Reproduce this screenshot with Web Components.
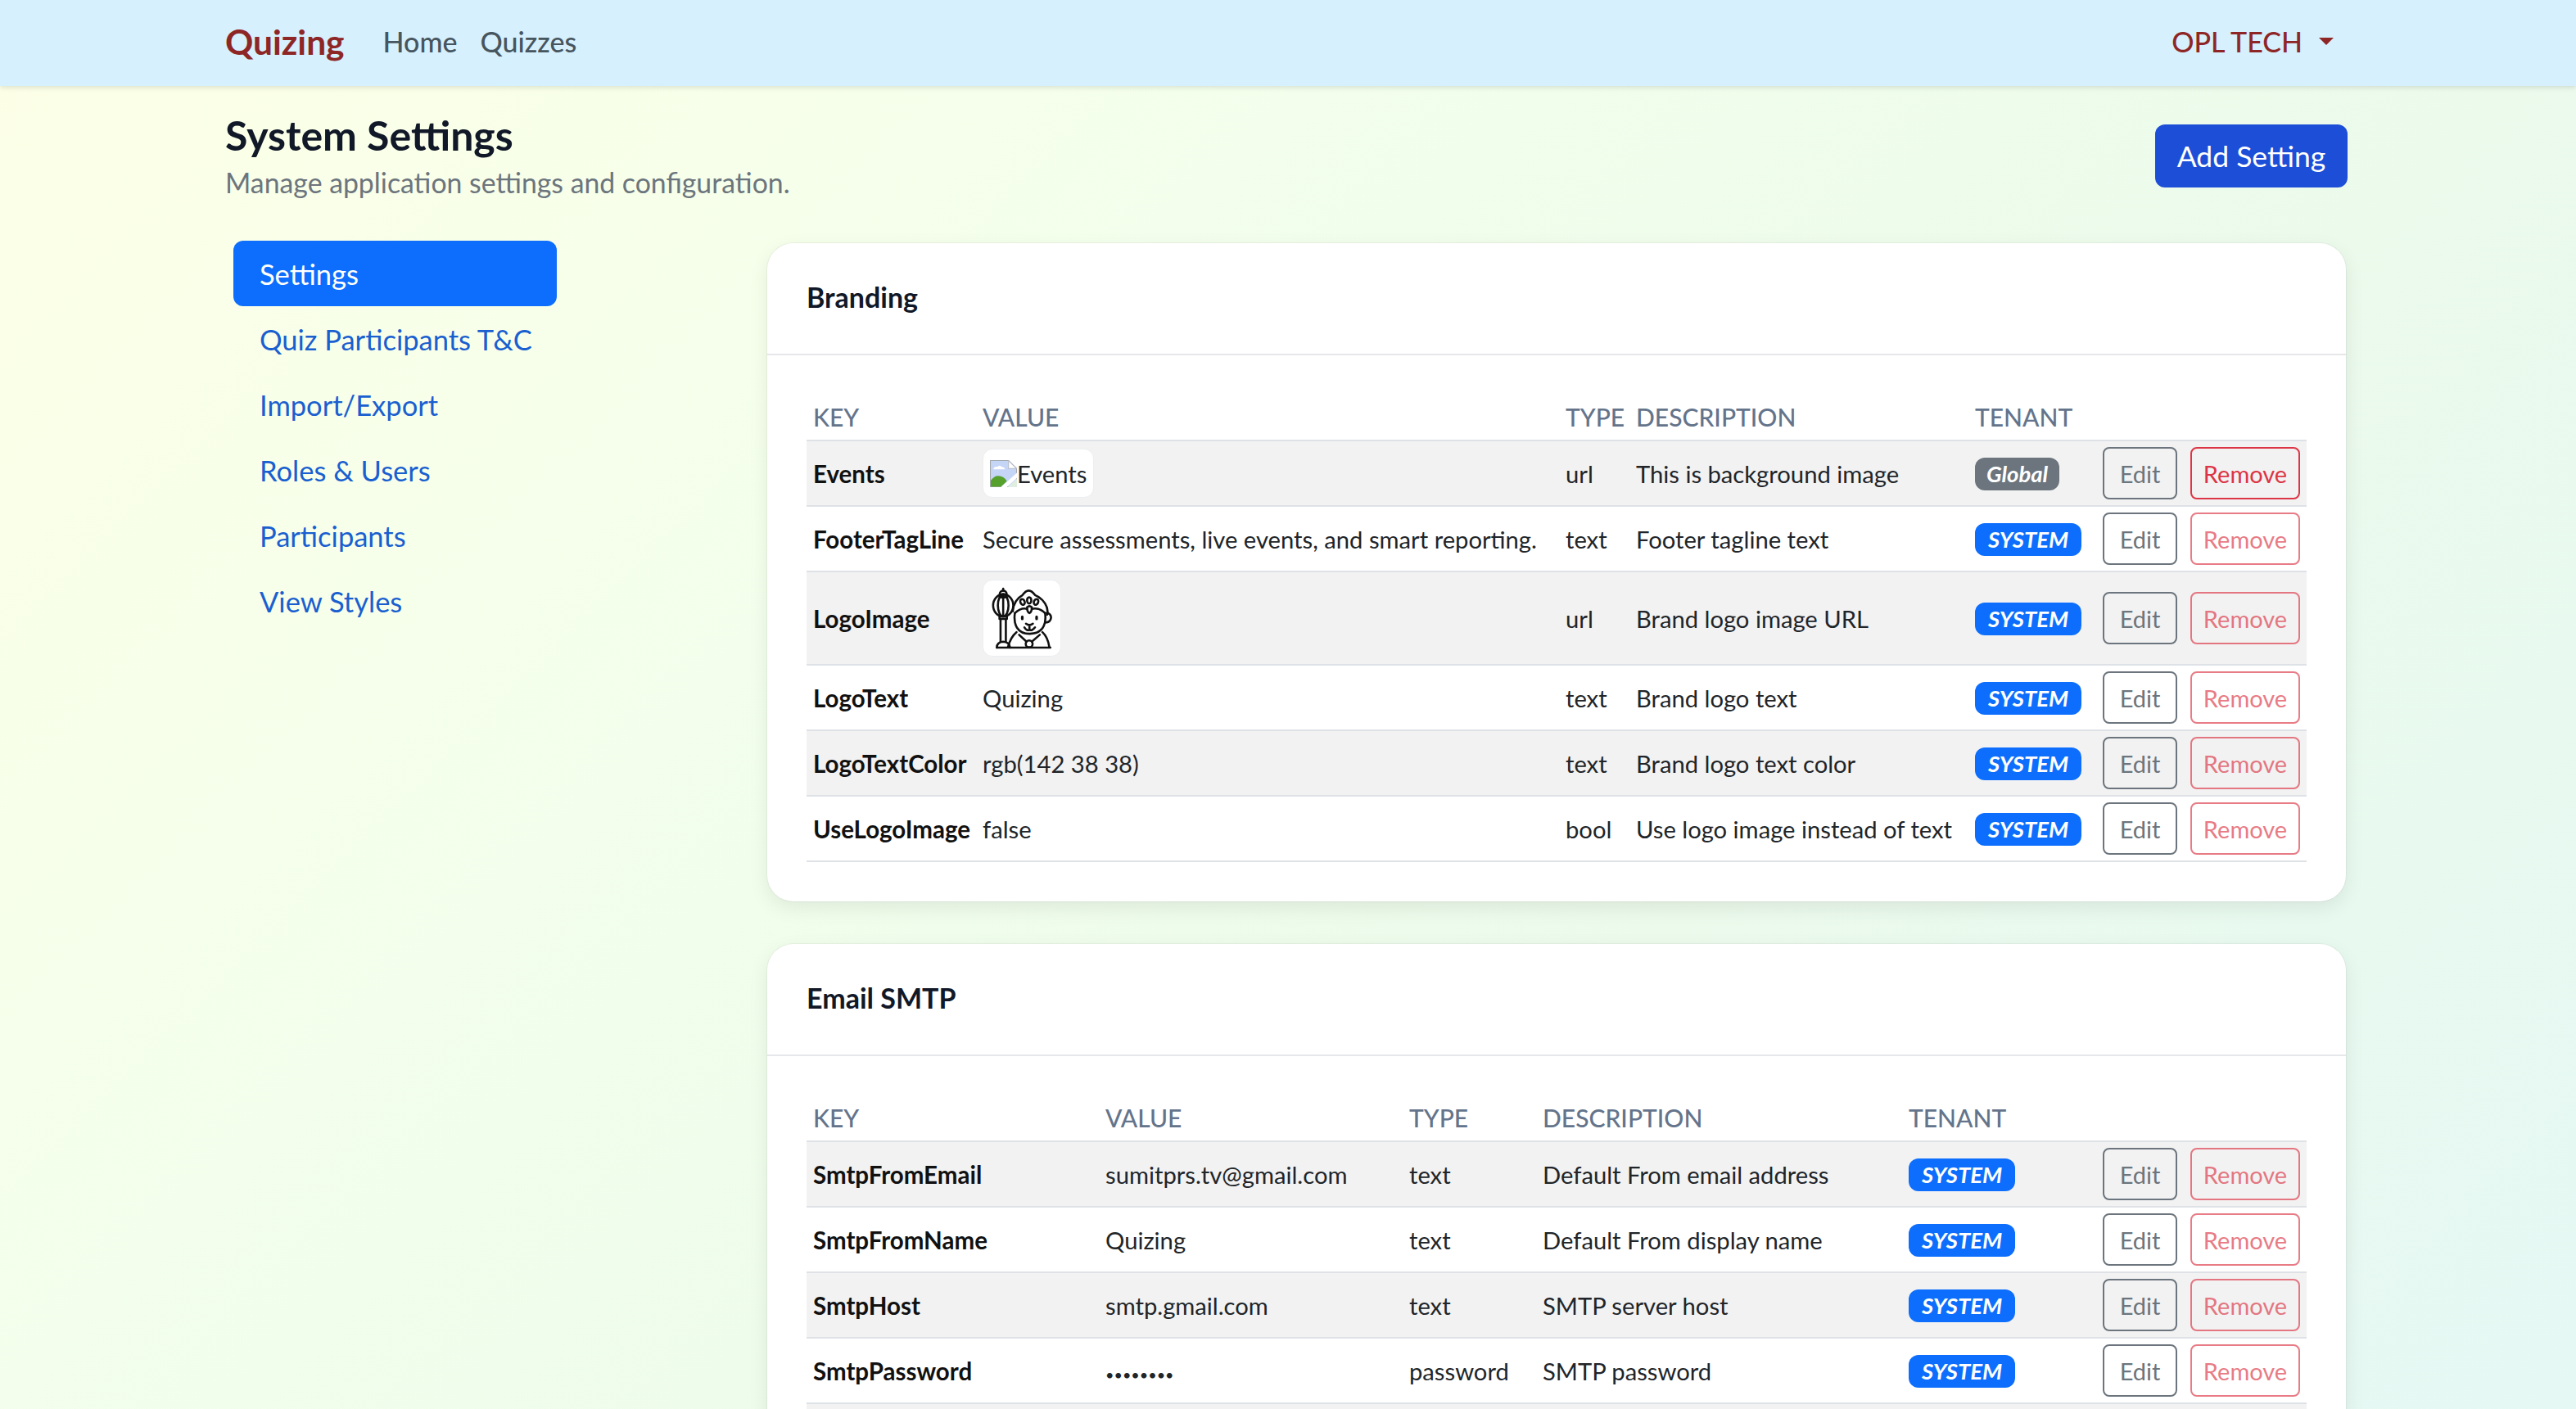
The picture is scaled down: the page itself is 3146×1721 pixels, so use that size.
<!DOCTYPE html>
<html lang="en">
<head>
<meta charset="utf-8">
<title>System Settings</title>
<style>
  html, body { margin: 0; height: 100%; overflow: hidden; }
  body {
    font-family: "Lato", "Noto Sans", sans-serif;
    font-size: 32px;
    color: #212529;
    background: linear-gradient(135deg, #fdffe6 0%, #f3ffec 35%, #ebfaeb 65%, #e5f8f4 100%);
  }
</style>
</head>
<body>
<app-navbar brand="Quizing" account="OPL TECH">
  <nav-link>Home</nav-link>
  <nav-link>Quizzes</nav-link>
</app-navbar>

<settings-page heading="System Settings" subtitle="Manage application settings and configuration." action="Add Setting">
  <side-pill slot="side" active>Settings</side-pill>
  <side-pill slot="side">Quiz Participants T&amp;C</side-pill>
  <side-pill slot="side">Import/Export</side-pill>
  <side-pill slot="side">Roles &amp; Users</side-pill>
  <side-pill slot="side">Participants</side-pill>
  <side-pill slot="side">View Styles</side-pill>

  <settings-card heading="Branding" cols="207px 712px 86px 414px 156px 257px">
    <setting-row key="Events" type="url" description="This is background image" tenant="Global">
      <image-chip slot="value" broken>Events</image-chip>
    </setting-row>
    <setting-row key="FooterTagLine" value="Secure assessments, live events, and smart reporting." type="text" description="Footer tagline text" tenant="SYSTEM"></setting-row>
    <setting-row key="LogoImage" type="url" description="Brand logo image URL" tenant="SYSTEM">
      <image-chip slot="value" logo></image-chip>
    </setting-row>
    <setting-row key="LogoText" value="Quizing" type="text" description="Brand logo text" tenant="SYSTEM"></setting-row>
    <setting-row key="LogoTextColor" value="rgb(142 38 38)" type="text" description="Brand logo text color" tenant="SYSTEM"></setting-row>
    <setting-row key="UseLogoImage" value="false" type="bool" description="Use logo image instead of text" tenant="SYSTEM"></setting-row>
  </settings-card>

  <settings-card heading="Email SMTP" cols="357px 371px 163px 447px 237px 257px">
    <setting-row key="SmtpFromEmail" value="sumitprs.tv@gmail.com" type="text" description="Default From email address" tenant="SYSTEM"></setting-row>
    <setting-row key="SmtpFromName" value="Quizing" type="text" description="Default From display name" tenant="SYSTEM"></setting-row>
    <setting-row key="SmtpHost" value="smtp.gmail.com" type="text" description="SMTP server host" tenant="SYSTEM"></setting-row>
    <setting-row key="SmtpPassword" type="password" description="SMTP password" tenant="SYSTEM">
      <span slot="value" style="font-size:18px">••••••••</span>
    </setting-row>
    <setting-row blank></setting-row>
  </settings-card>
</settings-page>

<script>
// Top navigation bar
class AppNavbar extends HTMLElement {
  connectedCallback() {
    this.attachShadow({ mode: 'open' });
    this.shadowRoot.innerHTML = `
      <style>
        :host {
          display: flex;
          align-items: center;
          height: 105px;
          padding: 0 296px 5px 275px;
          box-sizing: border-box;
          background: #d6f0fd;
          box-shadow: 0 2px 6px rgba(0,0,0,.12);
          position: relative;
        }
        .brand { font-size: 42.5px; font-weight: 700; color: rgb(142,38,38); margin-right: 47px; }
        .links { display: flex; gap: 28px; flex: 1; }
        .account { display: flex; align-items: center; gap: 20px; font-size: 34px; font-weight: 500; color: rgb(142,38,38); }
        .caret { width: 0; height: 0; border: 9px solid transparent; border-top-color: rgb(142,38,38); border-bottom: 0; }
      </style>
      <span class="brand">${this.getAttribute('brand')}</span>
      <div class="links"><slot></slot></div>
      <div class="account">${this.getAttribute('account')}<span class="caret"></span></div>
    `;
  }
}

class NavLink extends HTMLElement {
  connectedCallback() {
    this.attachShadow({ mode: 'open' });
    this.shadowRoot.innerHTML = `
      <style>:host { display: block; font-size: 34px; font-weight: 500; color: #47555e; }</style>
      <slot></slot>
    `;
  }
}

// Page head plus sidebar / content columns
class SettingsPage extends HTMLElement {
  connectedCallback() {
    this.attachShadow({ mode: 'open' });
    this.shadowRoot.innerHTML = `
      <style>
        :host { display: block; padding: 0 281px 0 275px; }
        .head { display: flex; justify-content: space-between; height: 192px; }
        h1 { margin: 32px 0 0; font-size: 50px; line-height: 56px; font-weight: 700; color: #111827; }
        p { margin: 6px 0 0; font-size: 33.8px; line-height: 48px; color: #6c757d; }
        .add {
          align-self: flex-start;
          margin: 47px -2px 0 0;
          width: 235px;
          height: 77px;
          display: flex; align-items: center; justify-content: center;
          background: #1d4ed8;
          color: #fff;
          border-radius: 12px;
          font-size: 35.5px;
        }
        .cols { display: flex; }
        .side { width: 395px; margin: -3px 257px 0 10px; flex: none; display: flex; flex-direction: column; }
        .main { flex: 1; min-width: 0; display: flex; flex-direction: column; gap: 52px; }
      </style>
      <div class="head">
        <div>
          <h1>${this.getAttribute('heading')}</h1>
          <p>${this.getAttribute('subtitle')}</p>
        </div>
        <div class="add">${this.getAttribute('action')}</div>
      </div>
      <div class="cols">
        <div class="side"><slot name="side"></slot></div>
        <div class="main"><slot></slot></div>
      </div>
    `;
  }
}

class SidePill extends HTMLElement {
  connectedCallback() {
    this.attachShadow({ mode: 'open' });
    this.shadowRoot.innerHTML = `
      <style>
        :host {
          display: flex;
          align-items: center;
          height: 80px;
          padding: 0 32px;
          box-sizing: border-box;
          font-size: 34.5px;
          white-space: nowrap;
          color: #1a5fd0;
          border-radius: 12px;
        }
        :host([active]) { background: #0d6efd; color: #fff; }
      </style>
      <slot></slot>
    `;
  }
}

class SettingsCard extends HTMLElement {
  connectedCallback() {
    this.attachShadow({ mode: 'open' });
    const labels = ['Key', 'Value', 'Type', 'Description', 'Tenant', ''];
    this.shadowRoot.innerHTML = `
      <style>
        :host {
          display: block;
          background: #fff;
          border-radius: 32px;
          box-shadow: 0 8px 24px rgba(0,0,0,.08), 0 0 0 1px rgba(0,0,0,.04);
          --cols: ${this.getAttribute('cols')};
        }
        h2 {
          margin: 0;
          height: 137px;
          padding: 0 48px 5px;
          display: flex; align-items: center;
          box-sizing: border-box;
          font-size: 34px;
          font-weight: 700;
          color: #111827;
          border-bottom: 2px solid #e5e7eb;
        }
        .body { padding: 47px 48px 48px; }
        .labels {
          display: grid;
          grid-template-columns: var(--cols);
          height: 56px;
          align-items: center;
          border-bottom: 2px solid #dee2e6;
          font-size: 30px;
          font-weight: 500;
          color: #64748b;
          text-transform: uppercase;
        }
        .labels span { padding: 0 8px; }
      </style>
      <h2>${this.getAttribute('heading')}</h2>
      <div class="body">
        <div class="labels">${labels.map(l => `<span>${l}</span>`).join('')}</div>
        <slot></slot>
      </div>
    `;
    // Stripe every other row
    Array.from(this.querySelectorAll('setting-row')).forEach((row, i) => {
      if (i % 2 === 0) row.setAttribute('striped', '');
    });
  }
}

// One row of a settings table
class SettingRow extends HTMLElement {
  connectedCallback() {
    this.attachShadow({ mode: 'open' });
    if (this.hasAttribute('blank')) {
      this.shadowRoot.innerHTML = `
        <style>:host { display: block; height: 80px; } :host([striped]) { background: #f2f2f2; }</style>
      `;
      return;
    }
    const tenant = this.getAttribute('tenant');
    this.shadowRoot.innerHTML = `
      <style>
        :host {
          display: grid;
          grid-template-columns: var(--cols);
          align-items: center;
          min-height: 80px;
          box-sizing: border-box;
          border-bottom: 2px solid #dee2e6;
          font-size: 29.2px;
          color: #212529;
        }
        :host([striped]) { background: #f2f2f2; }
        .cell { padding: 0 8px; white-space: nowrap; }
        .key { font-size: 29.5px; font-weight: 700; color: #111; }
        .actions { display: flex; gap: 16px; justify-content: flex-end; }
      </style>
      <div class="cell key">${this.getAttribute('key')}</div>
      <div class="cell"><slot name="value">${this.getAttribute('value') || ''}</slot></div>
      <div class="cell">${this.getAttribute('type')}</div>
      <div class="cell">${this.getAttribute('description')}</div>
      <div class="cell"><tenant-badge ${tenant === 'Global' ? 'global' : ''}>${tenant}</tenant-badge></div>
      <div class="cell actions">
        <row-button kind="edit">Edit</row-button>
        <row-button kind="remove" ${tenant === 'Global' ? '' : 'disabled'}>Remove</row-button>
      </div>
    `;
  }
}

class TenantBadge extends HTMLElement {
  connectedCallback() {
    this.attachShadow({ mode: 'open' });
    this.shadowRoot.innerHTML = `
      <style>
        :host {
          display: inline-flex;
          align-items: center;
          height: 40px;
          padding: 0 16px;
          border-radius: 12px;
          background: #0d6efd;
          color: #fff;
          font-size: 27.5px;
          font-weight: 700;
          font-style: italic;
          vertical-align: middle;
        }
        :host([global]) { background: #6c757d; padding: 0 14px; }
      </style>
      <slot></slot>
    `;
  }
}

class RowButton extends HTMLElement {
  connectedCallback() {
    this.attachShadow({ mode: 'open' });
    this.shadowRoot.innerHTML = `
      <style>
        :host {
          display: flex;
          align-items: center;
          justify-content: center;
          height: 64px;
          box-sizing: border-box;
          border: 2px solid #6c757d;
          border-radius: 8px;
          color: #6c757d;
          font-size: 29px;
        }
        :host([kind=edit]) { width: 91px; }
        :host([kind=remove]) { width: 134px; border-color: #dc3545; color: #dc3545; }
        :host([disabled]) { opacity: .65; }
      </style>
      <slot></slot>
    `;
  }
}

// Thumbnail in the value column: broken image or the logo
class ImageChip extends HTMLElement {
  connectedCallback() {
    this.attachShadow({ mode: 'open' });
    const broken = `<svg width="33" height="33" viewBox="0 0 32 32">
        <path d="M.5 .5H22L31.5 10V31.5H.5Z" fill="#c4d5f6" stroke="#a3a8ad" stroke-width="1"/>
        <path d="M22 .5V10H31.5Z" fill="#fff" stroke="#b5bcc6" stroke-width="1"/>
        <path d="M4 11Q5 7 9 8Q11 5 14 8Q17 8 18 11Z" fill="#fff"/>
        <path d="M1 31.5V24Q6 17 12 19Q17 20 20 25L13 31.5Z" fill="#56a02c"/>
        <path d="M13 32L32 15V21L20 32Z" fill="#fff"/>
        <path d="M21 32L32 22V32Z" fill="#dfeee0"/>
      </svg>`;
    const logo = `<svg width="90" height="90" viewBox="65 52 275 278" fill="none" stroke="#111" stroke-width="8" stroke-linecap="round" stroke-linejoin="round">
        <circle cx="132" cy="100" r="13"/>
        <path d="M132 87V80M120 112H144"/>
        <ellipse cx="132" cy="143" rx="38" ry="42"/>
        <ellipse cx="132" cy="143" rx="20" ry="42"/>
        <path d="M132 101V185"/>
        <path d="M118 184H146V194H118Z"/>
        <path d="M122 194V280M142 194V280"/>
        <path d="M108 302Q108 282 132 280Q156 282 158 302"/>
        <path d="M108 302H310"/>
        <path d="M168 165C172 125 190 112 205 104Q228 70 252 104C285 118 305 150 298 178"/>
        <ellipse cx="205" cy="130" rx="8" ry="11" transform="rotate(-25 205 130)"/>
        <ellipse cx="230" cy="124" rx="8" ry="12"/>
        <ellipse cx="256" cy="130" rx="8" ry="11" transform="rotate(25 256 130)"/>
        <path d="M176 172Q200 150 222 156M240 156Q268 150 290 172"/>
        <path d="M222 150Q231 142 240 150Q240 168 231 172Q222 168 222 150Z"/>
        <path d="M176 172C170 215 185 250 232 250C280 250 296 215 290 172"/>
        <path d="M296 172C318 172 320 205 290 208"/>
        <path d="M204 186V194M258 186V194" stroke-width="10"/>
        <path d="M218 212Q231 222 244 212M231 218V234"/>
        <path d="M212 226Q222 242 231 234Q240 242 252 226"/>
        <path d="M150 300Q160 262 182 244M280 244Q300 262 306 300"/>
        <path d="M192 254L220 280M270 254L240 280"/>
        <circle cx="230" cy="288" r="13"/>
      </svg>`;
    this.shadowRoot.innerHTML = `
      <style>
        :host {
          display: inline-flex;
          align-items: center;
          box-sizing: border-box;
          background: #fff;
          border: 1px solid #eceef0;
          border-radius: 12px;
          height: 60px;
          padding: 0 8px;
          vertical-align: middle;
        }
        :host([logo]) { height: 94px; padding: 1px 2px; margin: 9px 0; }
      </style>
      ${this.hasAttribute('logo') ? logo : broken}<slot></slot>
    `;
  }
}

customElements.define('app-navbar', AppNavbar);
customElements.define('nav-link', NavLink);
customElements.define('settings-page', SettingsPage);
customElements.define('side-pill', SidePill);
customElements.define('settings-card', SettingsCard);
customElements.define('setting-row', SettingRow);
customElements.define('tenant-badge', TenantBadge);
customElements.define('row-button', RowButton);
customElements.define('image-chip', ImageChip);
</script>
</body>
</html>
